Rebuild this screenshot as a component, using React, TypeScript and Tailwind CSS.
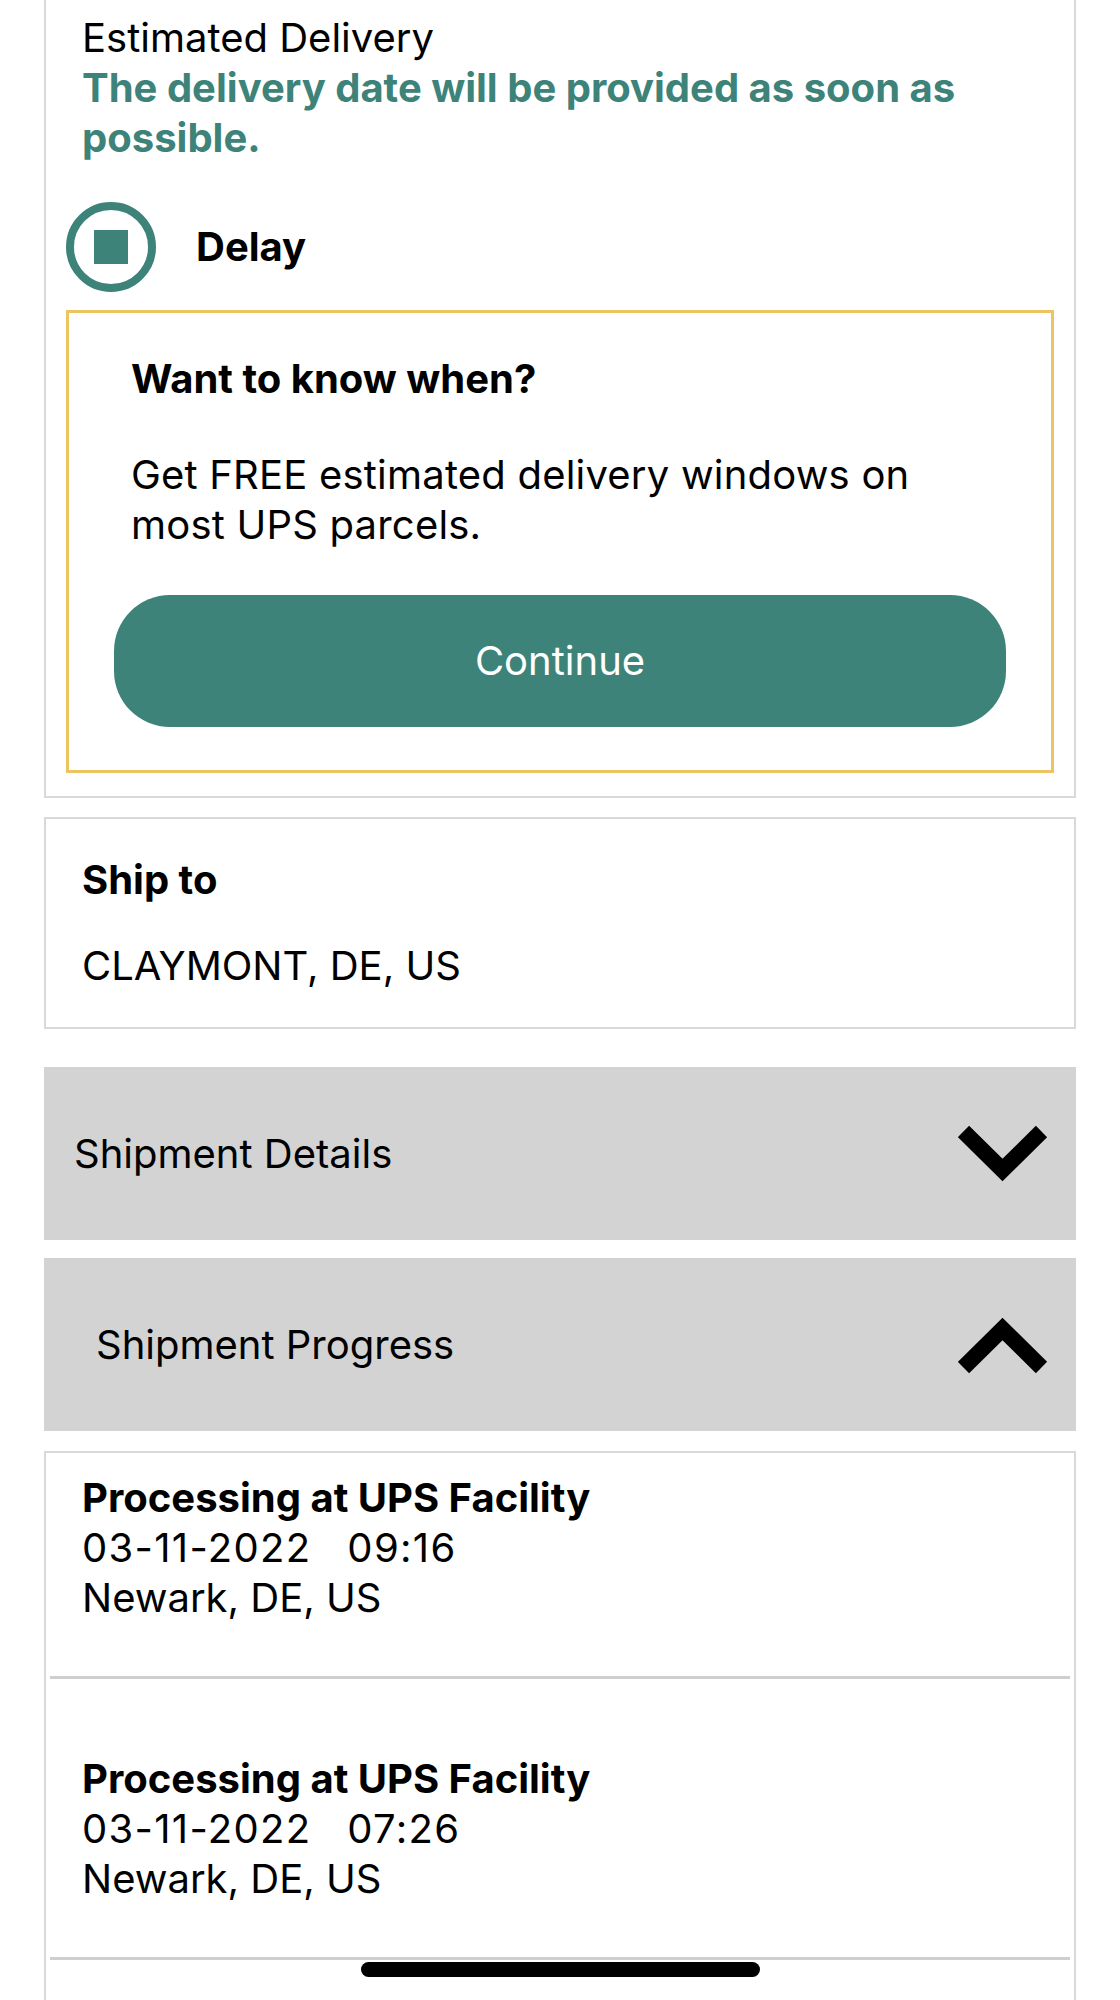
import React from "react";

function Chevron({ up }: { up?: boolean }) {
  return (
    <svg width="90" height="58" viewBox="0 0 90 58" className="shrink-0">
      {up ? (
        <polyline points="5.5,51.5 44.5,13 83.5,51.5" fill="none" stroke="#000" strokeWidth="16" strokeLinejoin="miter" strokeMiterlimit="4" />
      ) : (
        <polyline points="5.5,6.5 44.5,45 83.5,6.5" fill="none" stroke="#000" strokeWidth="16" strokeLinejoin="miter" strokeMiterlimit="4" />
      )}
    </svg>
  );
}

export default function App() {
  const items = [
    { title: "Processing at UPS Facility", date: "03-11-2022", time: "09:16", place: "Newark, DE, US" },
    { title: "Processing at UPS Facility", date: "03-11-2022", time: "07:26", place: "Newark, DE, US" },
  ];
  return (
    <div className="relative w-[1120px] h-[2000px] overflow-hidden bg-white text-black font-['Inter','Liberation_Sans',sans-serif]">
      <div className="flex flex-col px-[44px]">
        {/* Top card */}
        <div className="border-x-2 border-b-2 border-[#d9d9d9] px-[20px] pb-[23px]">
          <div className="pl-[16px] pt-[13px]">
            <p className="text-[40px] leading-[50px]">Estimated Delivery</p>
            <p className="text-[40px] leading-[50px] font-bold text-[#3d8379]">
              The delivery date will be provided as soon as possible.
            </p>
          </div>
          <div className="mt-[39px] flex items-center gap-[40px]">
            <div className="flex h-[90px] w-[90px] items-center justify-center rounded-full border-[8px] border-[#3d8379]">
              <div className="h-[34px] w-[34px] bg-[#3d8379]" />
            </div>
            <span className="text-[40px] leading-[50px] font-bold">Delay</span>
          </div>
          <div className="mt-[18px] border-[3px] border-[#ecc462] pb-[43px]">
            <div className="pl-[62px] pr-[40px] pt-[41px]">
              <p className="text-[40px] leading-[50px] font-bold">Want to know when?</p>
              <p className="mt-[46px] text-[40px] leading-[50px] tracking-[0.2px]">
                Get FREE estimated delivery windows on
                <br />
                most UPS parcels.
              </p>
            </div>
            <button className="mx-[45px] mt-[45px] flex h-[132px] w-[892px] items-center justify-center rounded-[56px] bg-[#3d8379] text-[40px] text-white">
              Continue
            </button>
          </div>
        </div>

        {/* Ship to */}
        <div className="mt-[19px] border-2 border-[#d9d9d9] pl-[36px] pt-[36px] pb-[36px]">
          <p className="text-[40px] leading-[50px] font-bold">Ship to</p>
          <p className="mt-[36px] text-[40px] leading-[50px]">CLAYMONT, DE, US</p>
        </div>

        {/* Shipment Details */}
        <div className="mt-[38px] flex h-[173px] items-center justify-between bg-[#d3d3d3] pl-[30px] pr-[28px]">
          <span className="text-[40px] leading-[50px]">Shipment Details</span>
          <Chevron />
        </div>

        {/* Shipment Progress */}
        <div className="mt-[18px] flex h-[173px] items-center justify-between bg-[#d3d3d3] pl-[52px] pr-[28px]">
          <span className="text-[40px] leading-[50px]">Shipment Progress</span>
          <Chevron up />
        </div>

        {/* Progress list */}
        <div className="mt-[20px] border-x-2 border-t-2 border-[#d9d9d9] pb-[200px]">
          {items.map((it, i) => (
            <div key={i}>
              <div className={i === 0 ? "pl-[36px] pt-[20px] pb-[53px]" : "pl-[36px] pt-[75px] pb-[53px]"}>
                <p className="text-[40px] leading-[50px] font-bold">{it.title}</p>
                <p className="text-[40px] leading-[50px] tracking-[1.3px]">
                  {it.date}
                  <span className="inline-block w-[36px]" />
                  {it.time}
                </p>
                <p className="text-[40px] leading-[50px]">{it.place}</p>
              </div>
              <div className="mx-[4px] h-[3px] bg-[#cfcfcf]" />
            </div>
          ))}
        </div>
      </div>

      {/* Home indicator */}
      <div className="absolute left-[361px] top-[1962px] h-[15px] w-[399px] rounded-full bg-black" />
    </div>
  );
}
